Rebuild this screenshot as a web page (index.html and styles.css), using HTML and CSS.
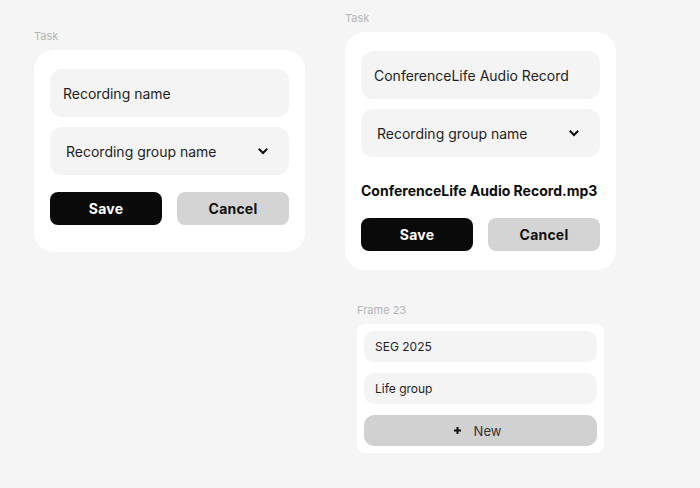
FILE: index.html
```html
<!DOCTYPE html>
<html lang="en">
<head>
<meta charset="utf-8">
<title>Task</title>
<link rel="stylesheet" href="styles.css">
</head>
<body>
<div class="page">
  <section class="col col-left">
    <div class="frame-label">Task</div>
    <div class="card card-a">
      <div class="field">Recording name</div>
      <div class="field field-select">
        <span>Recording group name</span>
        <svg class="chev" width="10" height="7" viewBox="0 0 10 7"><path d="M1.5 1.5 L5 5 L8.5 1.5" fill="none" stroke="#111" stroke-width="2" stroke-linecap="square"/></svg>
      </div>
      <div class="actions actions-a">
        <button class="btn btn-save">Save</button>
        <button class="btn btn-cancel">Cancel</button>
      </div>
    </div>
  </section>
  <section class="col col-right">
    <div class="frame-label">Task</div>
    <div class="card card-b">
      <div class="field">ConferenceLife Audio Record</div>
      <div class="field field-select">
        <span>Recording group name</span>
        <svg class="chev" width="10" height="7" viewBox="0 0 10 7"><path d="M1.5 1.5 L5 5 L8.5 1.5" fill="none" stroke="#111" stroke-width="2" stroke-linecap="square"/></svg>
      </div>
      <div class="filename">ConferenceLife Audio Record.mp3</div>
      <div class="actions">
        <button class="btn btn-save">Save</button>
        <button class="btn btn-cancel">Cancel</button>
      </div>
    </div>
    <div class="group-frame">
      <div class="frame-label">Frame 23</div>
      <div class="list-card">
        <div class="list-item">SEG 2025</div>
        <div class="list-item">Life group</div>
        <div class="list-item list-new">
          <svg class="plus" width="7" height="7" viewBox="0 0 7 7"><path d="M3.5 0 V7 M0 3.5 H7" stroke="#111" stroke-width="2"/></svg>
          <span>New</span>
        </div>
      </div>
    </div>
  </section>
</div>
</body>
</html>
```

FILE: styles.css
```css
* { box-sizing: border-box; }
html, body { margin: 0; padding: 0; }
body {
  background: #f5f5f5;
  font-family: Inter, "Noto Sans", "Liberation Sans", sans-serif;
  color: #1c1c1c;
  width: 700px;
  height: 488px;
  overflow: hidden;
}
.page {
  display: flex;
  padding-left: 34px;
}
.col { width: 271px; display: flex; flex-direction: column; }
.col-left { padding-top: 29px; }
.col-right { padding-top: 11px; margin-left: 40px; }
.frame-label {
  font-size: 11px;
  line-height: 14px;
  height: 14px;
  color: #b4b4b4;
  margin-bottom: 7px;
}
.card {
  background: #ffffff;
  border-radius: 20px;
  padding: 19px 16px;
  display: flex;
  flex-direction: column;
}
.card-a { padding-bottom: 27px; }
.field {
  height: 48px;
  background: #f4f4f4;
  border-radius: 12px;
  display: flex;
  align-items: center;
  padding: 0 12px 0 13px;
  font-size: 14px;
  color: #1e1e1e;
  margin-bottom: 10px;
}
.field-select {
  justify-content: space-between;
  padding: 0 21px 0 16px;
}
.chev { display: block; }
.filename {
  margin-top: 15px;
  font-size: 14px;
  font-weight: 700;
  line-height: 18px;
  color: #0d0d0d;
  margin-bottom: 18px;
}
.actions {
  display: flex;
  gap: 15px;
}
.actions-a { margin-top: 7px; }
.btn {
  flex: 1;
  height: 33px;
  border: none;
  border-radius: 8px;
  font-family: inherit;
  font-size: 14px;
  font-weight: 700;
  letter-spacing: 0.2px;
  cursor: pointer;
}
.btn-save { background: #0a0a0a; color: #ffffff; }
.btn-cancel { background: #d4d4d4; color: #111111; }
.group-frame {
  margin-top: 33px;
  margin-left: 12px;
  width: 247px;
}
.list-card {
  background: #ffffff;
  border-radius: 8px;
  padding: 7px;
  display: flex;
  flex-direction: column;
  gap: 11px;
}
.list-item {
  height: 31px;
  background: #f4f4f4;
  border-radius: 10px;
  display: flex;
  align-items: center;
  padding-left: 11px;
  font-size: 12px;
  color: #1e1e1e;
}
.list-new {
  background: #d1d1d1;
  justify-content: center;
  padding-left: 0;
  padding-right: 6px;
  gap: 13px;
  font-size: 13px;
  color: #333333;
}
.plus { display: block; }
```
